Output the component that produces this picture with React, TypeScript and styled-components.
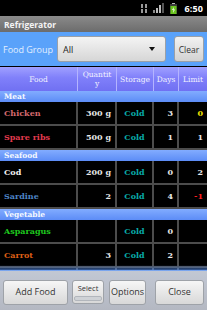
import React from "react";
import styled, { createGlobalStyle } from "styled-components";

type Food = {
    name: string;
    color: string;
    qty: string;
    days: string;
    limit: string;
    limitColor?: string;
};

type Group = {
    title: string;
    items: Array<Food>;
};

const groups: Array<Group> = [
    {
        title: "Meat",
        items: [
            { name: "Chicken", color: "#d46a6e", qty: "300 g", days: "3", limit: "0", limitColor: "#f2e600" },
            { name: "Spare ribs", color: "#e23a4e", qty: "500 g", days: "1", limit: "1" },
        ],
    },
    {
        title: "Seafood",
        items: [
            { name: "Cod", color: "#f2f2f2", qty: "200 g", days: "0", limit: "2" },
            { name: "Sardine", color: "#4d84c4", qty: "2", days: "4", limit: "-1", limitColor: "#ff1e1e" },
        ],
    },
    {
        title: "Vegetable",
        items: [
            { name: "Asparagus", color: "#1ec81e", qty: "", days: "0", limit: "" },
            { name: "Carrot", color: "#de5f16", qty: "3", days: "2", limit: "" },
        ],
    },
];

const GlobalStyle = createGlobalStyle`
    html, body {
        margin: 0;
        padding: 0;
        background: #000;
    }
    #root {
        width: 207px;
        height: 310px;
        overflow: hidden;
    }
`;

const Screen = styled.div`
    width: 207px;
    height: 310px;
    display: flex;
    flex-direction: column;
    background: #000;
    font-family: "Open Sans", "Liberation Sans", sans-serif;
`;

const StatusBar = styled.div`
    height: 16px;
    flex: none;
    background: #000;
    display: flex;
    align-items: center;
    justify-content: flex-end;
    gap: 6px;
    padding-right: 4px;
`;

const Clock = styled.span`
    color: #fff;
    font-weight: 700;
    font-size: 9px;
    margin-left: 2px;
    letter-spacing: 0.1px;
`;

const TitleBar = styled.div`
    height: 16px;
    flex: none;
    background: linear-gradient(#8a8a8a, #6c6c6c);
    color: #f4f4f4;
    font-weight: 700;
    font-size: 8.5px;
    display: flex;
    align-items: center;
    padding-left: 4px;
`;

const FilterBar = styled.div`
    height: 34px;
    flex: none;
    background: #5aa2fa;
    display: flex;
    align-items: center;
    padding: 0 3px;
    box-sizing: border-box;
`;

const FilterLabel = styled.span`
    color: #e2efff;
    font-size: 9px;
    width: 54px;
    flex: none;
`;

const Spinner = styled.div`
    width: 109px;
    height: 26px;
    box-sizing: border-box;
    border-radius: 3px;
    border: 1px solid #9aa0a8;
    background: linear-gradient(#f4f4f4, #d6d6d6);
    display: flex;
    align-items: center;
    justify-content: space-between;
    padding: 0 10px 0 5px;
    color: #222;
    font-size: 9px;
`;

const Caret = styled.span`
    width: 0;
    height: 0;
    border-left: 3.5px solid transparent;
    border-right: 3.5px solid transparent;
    border-top: 4px solid #111;
`;

const ClearButton = styled.div`
    width: 30px;
    height: 26px;
    margin-left: 8px;
    box-sizing: border-box;
    border-radius: 3px;
    border: 1px solid #9aa0a8;
    background: linear-gradient(#f2f2f2, #d2d2d2);
    display: flex;
    align-items: center;
    justify-content: center;
    color: #333;
    font-size: 8.5px;
`;

const TableArea = styled.div`
    flex: 1;
    overflow: hidden;
    padding-top: 1px;
    background: #000;
`;

const columns = "78px 39px 37px 25px 28px";

const HeaderRow = styled.div`
    display: grid;
    grid-template-columns: ${columns};
    height: 24px;
    background: linear-gradient(#a0a0ff, #8080fa 45%, #7070f2);
`;

const HeaderCell = styled.div`
    display: flex;
    align-items: center;
    justify-content: center;
    text-align: center;
    color: #f2f2ff;
    font-family: "DejaVu Serif", "Liberation Serif", serif;
    font-size: 7.5px;
    line-height: 9px;
    border-right: 1px solid #b4b4ff;
    &:last-child {
        border-right: none;
    }
`;

const CategoryRow = styled.div`
    height: 11px;
    background: linear-gradient(#82acff, #5c8cf6);
    color: #f4f8ff;
    font-family: "DejaVu Serif", "Liberation Serif", serif;
    font-weight: 700;
    font-size: 7.5px;
    display: flex;
    align-items: center;
    padding-left: 4px;
`;

const DataRow = styled.div`
    display: grid;
    grid-template-columns: ${columns};
    height: 24px;
    box-sizing: border-box;
    border-bottom: 2px solid #4c4c4c;
`;

interface CellProps {
    $align: "left" | "center" | "right";
    $color: string;
}

const Cell = styled.div<CellProps>`
    display: flex;
    align-items: center;
    justify-content: ${(p) =>
        p.$align === "left" ? "flex-start" : p.$align === "center" ? "center" : "flex-end"};
    padding: 0 4px;
    color: ${(p) => p.$color};
    font-family: "DejaVu Serif", "Liberation Serif", serif;
    font-weight: 700;
    font-size: 8px;
    border-right: 2px solid #4c4c4c;
    white-space: nowrap;
    &:last-child {
        border-right: none;
    }
`;

const BottomBar = styled.div`
    position: relative;
    height: 40px;
    flex: none;
    background: linear-gradient(#c2c8d4, #b4b8c2);
    display: flex;
    align-items: center;
    padding: 0 3px;
    box-sizing: border-box;
    &::before {
        content: "";
        position: absolute;
        left: 0;
        right: 0;
        top: -5px;
        height: 6px;
        background: linear-gradient(rgba(90, 150, 250, 0), rgba(90, 150, 250, 0.75));
    }
`;

interface BarButtonProps {
    $width: number;
    $gap?: number;
}

const BarButton = styled.div<BarButtonProps>`
    flex: none;
    width: ${(p) => p.$width}px;
    height: 25px;
    margin-left: ${(p) => p.$gap ?? 0}px;
    margin-top: 4px;
    box-sizing: border-box;
    border-radius: 3px;
    border: 1px solid #9ea2a8;
    background: linear-gradient(#f6f6f6, #d8d8d8);
    display: flex;
    align-items: center;
    justify-content: center;
    color: #333;
    font-size: 9px;
    line-height: 12px;
    white-space: nowrap;
`;

const SelectButton = styled(BarButton)`
    flex-direction: column;
    justify-content: flex-start;
    height: 24px;
    padding-top: 2px;
    font-size: 7.5px;
    line-height: 10px;
    gap: 3px;
`;

const SelectTrack = styled.span`
    width: 26px;
    height: 3px;
    border-radius: 2px;
    background: #cfd2d6;
    border: 1px solid #b2b6bc;
`;

const StatusIcons = () => (
    <>
        <svg width="6" height="9" viewBox="0 0 6 9">
            <rect x="0" y="0" width="2" height="9" fill="#9a9a9a" />
            <rect x="4" y="0" width="2" height="9" fill="#9a9a9a" />
            <rect x="0" y="4" width="6" height="1" fill="#000" />
        </svg>
        <svg width="11" height="10" viewBox="0 0 11 10">
            <rect x="0" y="7" width="2" height="3" fill="#8a8a8a" />
            <rect x="3" y="5" width="2" height="5" fill="#bbb" />
            <rect x="6" y="2" width="2" height="8" fill="#bbb" />
            <rect x="9" y="0" width="2" height="10" fill="#555" />
        </svg>
        <svg width="7" height="11" viewBox="0 0 7 11">
            <rect x="2" y="0" width="3" height="1" fill="#bbb" />
            <rect x="0" y="1" width="7" height="10" fill="#3a3a3a" />
            <rect x="0.5" y="3" width="6" height="8" fill="#6ac41e" />
            <path d="M4 4 L2 7 L3.5 7 L3 10 L5 6.5 L3.5 6.5 Z" fill="#fff" />
        </svg>
    </>
);

const App = () => {
    return (
        <Screen>
            <GlobalStyle />
            <StatusBar>
                <StatusIcons />
                <Clock>6:50</Clock>
            </StatusBar>
            <TitleBar>Refrigerator</TitleBar>
            <FilterBar>
                <FilterLabel>Food Group</FilterLabel>
                <Spinner>
                    <span>All</span>
                    <Caret />
                </Spinner>
                <ClearButton>Clear</ClearButton>
            </FilterBar>
            <TableArea>
                <HeaderRow>
                    <HeaderCell>Food</HeaderCell>
                    <HeaderCell>
                        Quantit
                        <br />y
                    </HeaderCell>
                    <HeaderCell>Storage</HeaderCell>
                    <HeaderCell>Days</HeaderCell>
                    <HeaderCell>Limit</HeaderCell>
                </HeaderRow>
                {groups.map((group) => (
                    <React.Fragment key={group.title}>
                        <CategoryRow>{group.title}</CategoryRow>
                        {group.items.map((item) => (
                            <DataRow key={item.name}>
                                <Cell $align="left" $color={item.color}>
                                    {item.name}
                                </Cell>
                                <Cell $align="right" $color="#e8e8e8">
                                    {item.qty}
                                </Cell>
                                <Cell $align="center" $color="#08aaa8">
                                    Cold
                                </Cell>
                                <Cell $align="right" $color="#e8e8e8">
                                    {item.days}
                                </Cell>
                                <Cell $align="right" $color={item.limitColor ?? "#e8e8e8"}>
                                    {item.limit}
                                </Cell>
                            </DataRow>
                        ))}
                    </React.Fragment>
                ))}
                {/* next row, scrolled under the button bar */}
                <DataRow>
                    <Cell $align="left" $color="#e8e8e8" />
                    <Cell $align="right" $color="#e8e8e8" />
                    <Cell $align="center" $color="#e8e8e8" />
                    <Cell $align="right" $color="#e8e8e8" />
                    <Cell $align="right" $color="#e8e8e8" />
                </DataRow>
            </TableArea>
            <BottomBar>
                <BarButton $width={65}>Add Food</BarButton>
                <SelectButton $width={32} $gap={4}>
                    Select
                    <SelectTrack />
                </SelectButton>
                <BarButton $width={37} $gap={5}>
                    Options
                </BarButton>
                <BarButton $width={49} $gap={9}>
                    Close
                </BarButton>
            </BottomBar>
        </Screen>
    );
};

export default App;
